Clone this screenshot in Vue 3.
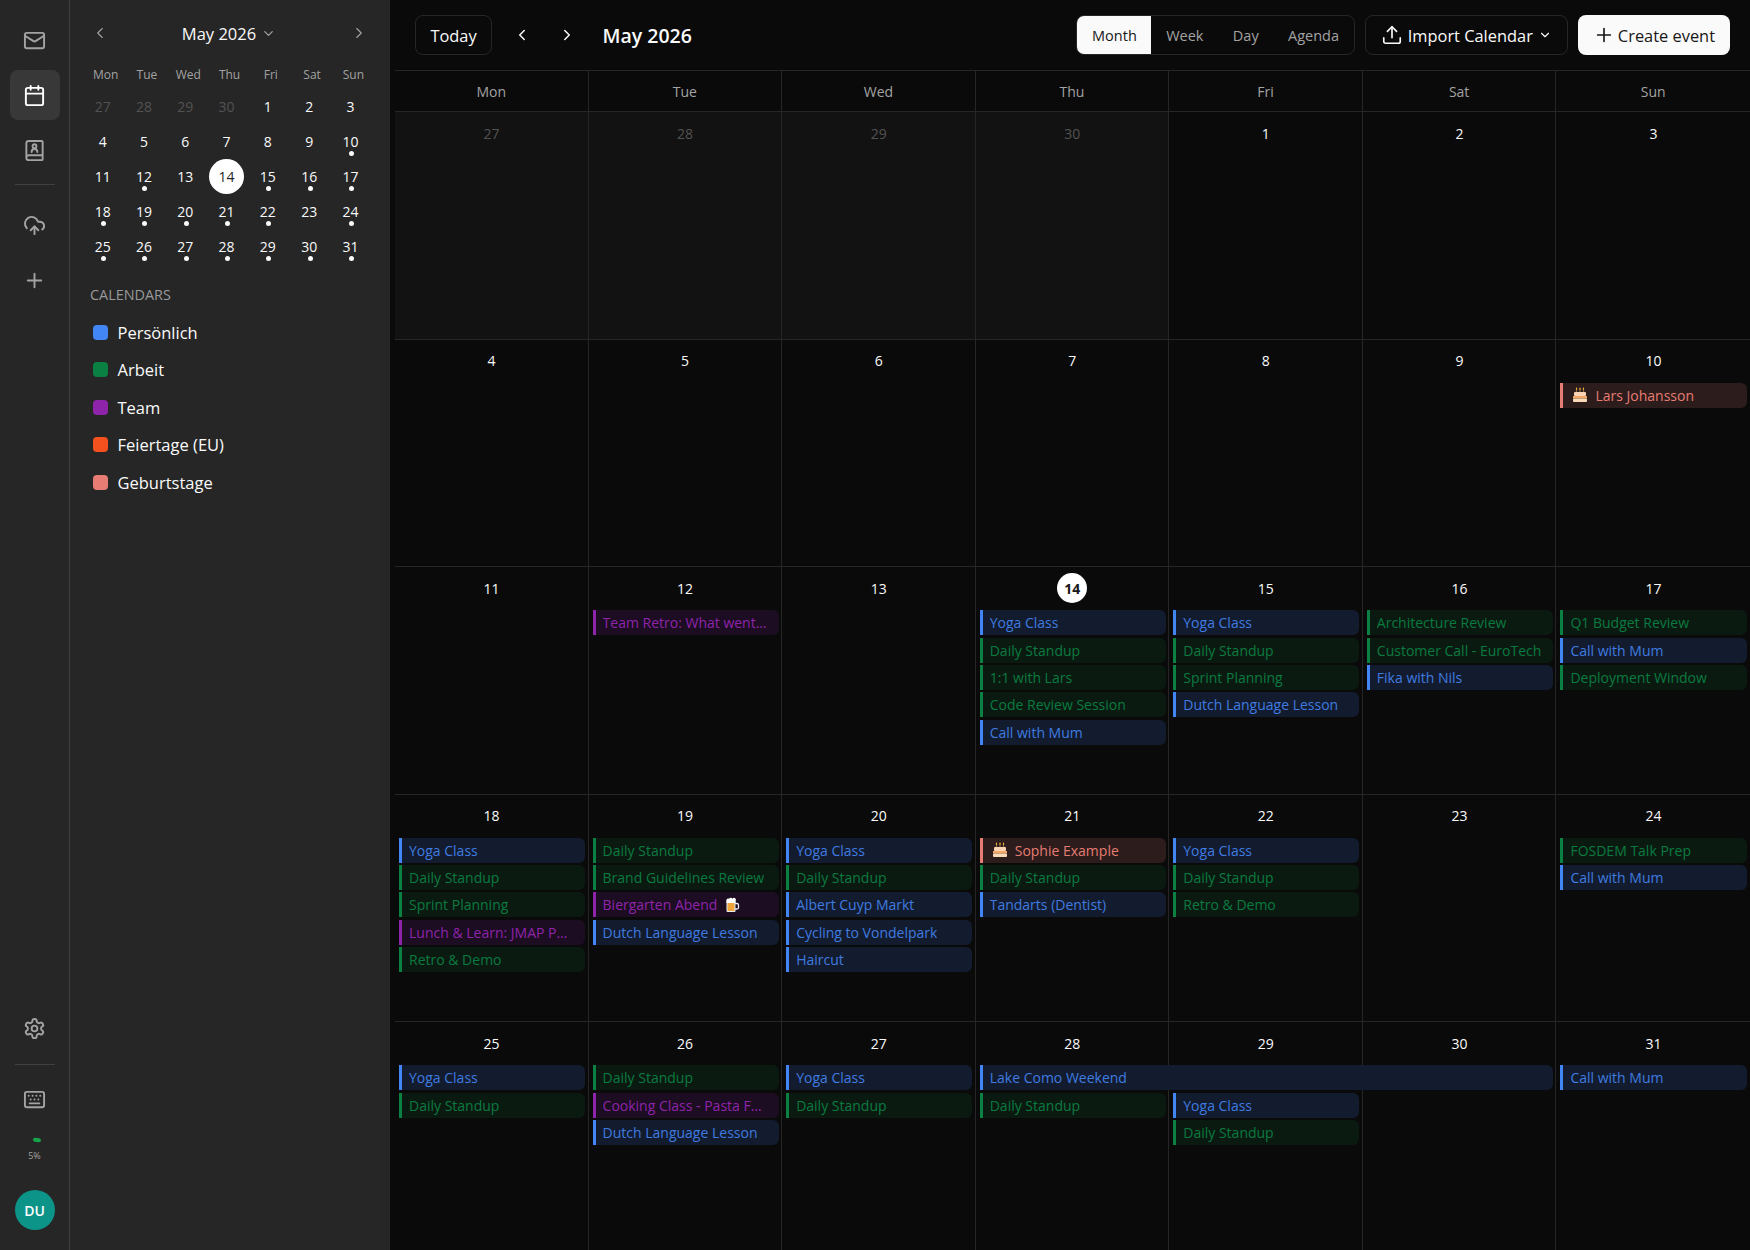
<template>
  <div class="app">
    <!-- Icon rail -->
    <nav class="rail">
      <button class="rail-btn">
        <svg class="ico" viewBox="0 0 24 24"><rect x="2" y="4" width="20" height="16" rx="2" /><path d="m22 7-8.97 5.7a1.94 1.94 0 0 1-2.06 0L2 7" /></svg>
      </button>
      <button class="rail-btn active">
        <svg class="ico" viewBox="0 0 24 24"><path d="M8 2v4M16 2v4" /><rect x="3" y="4" width="18" height="18" rx="2" /><path d="M3 10h18" /></svg>
      </button>
      <button class="rail-btn">
        <svg class="ico" viewBox="0 0 24 24"><path d="M3.500 19.500v-15A2.500 2.500 0 0 1 6 2h13.500a1 1 0 0 1 1 1v18a1 1 0 0 1-1 1H6a2.500 2.500 0 0 1-2.500-2.500zM3.500 19.500A2.500 2.500 0 0 1 6 17h14.500" /><path d="M15 13.500a3 3 0 1 0-6 0" /><circle cx="12" cy="7.500" r="2" /></svg>
      </button>
      <div class="rail-sep first"></div>
      <button class="rail-btn">
        <svg class="ico" viewBox="0 0 24 24"><path d="M12 13v8" /><path d="M4 14.899A7 7 0 1 1 15.71 8h1.79a4.500 4.500 0 0 1 2.500 8.242" /><path d="m8 17 4-4 4 4" /></svg>
      </button>
      <button class="rail-btn">
        <svg class="ico" viewBox="0 0 24 24"><path d="M5 12h14M12 5v14" /></svg>
      </button>

      <div class="rail-spacer"></div>

      <button class="rail-btn">
        <svg class="ico" viewBox="0 0 24 24"><path d="M12.220 2h-.44a2 2 0 0 0-2 2v.18a2 2 0 0 1-1 1.730l-.43.25a2 2 0 0 1-2 0l-.15-.08a2 2 0 0 0-2.730.73l-.22.38a2 2 0 0 0 .73 2.730l.15.1a2 2 0 0 1 1 1.720v.51a2 2 0 0 1-1 1.740l-.15.09a2 2 0 0 0-.73 2.730l.22.38a2 2 0 0 0 2.730.73l.15-.08a2 2 0 0 1 2 0l.43.25a2 2 0 0 1 1 1.730V20a2 2 0 0 0 2 2h.44a2 2 0 0 0 2-2v-.18a2 2 0 0 1 1-1.730l.43-.25a2 2 0 0 1 2 0l.15.08a2 2 0 0 0 2.730-.73l.22-.39a2 2 0 0 0-.73-2.730l-.15-.08a2 2 0 0 1-1-1.740v-.5a2 2 0 0 1 1-1.740l.15-.09a2 2 0 0 0 .73-2.730l-.22-.38a2 2 0 0 0-2.730-.73l-.15.08a2 2 0 0 1-2 0l-.43-.25a2 2 0 0 1-1-1.730V4a2 2 0 0 0-2-2z" /><circle cx="12" cy="12" r="3" /></svg>
      </button>
      <div class="rail-sep"></div>
      <button class="rail-btn short">
        <svg class="ico" viewBox="0 0 24 24"><path d="M10 8h.01M12 12h.01M14 8h.01M16 12h.01M18 8h.01M6 8h.01M7 16h10M8 12h.01" /><rect x="2" y="4" width="20" height="16" rx="2" /></svg>
      </button>
      <div class="gauge">
        <span class="gauge-bar"></span>
        <span class="gauge-label">5%</span>
      </div>
      <div class="avatar">DU</div>
    </nav>

    <!-- Sidebar with mini month and calendar list -->
    <aside class="sidebar">
      <div class="mini-head">
        <svg class="mini-chev" viewBox="0 0 24 24"><path d="m15 18-6-6 6-6" /></svg>
        <div class="mini-title">
          May 2026
          <svg class="mini-caret" viewBox="0 0 24 24"><path d="m6 9 6 6 6-6" /></svg>
        </div>
        <svg class="mini-chev" viewBox="0 0 24 24"><path d="m9 18 6-6-6-6" /></svg>
      </div>
      <div class="mini-weekdays">
        <span v-for="d in weekdays" :key="d">{{ d }}</span>
      </div>
      <div class="mini-grid">
        <div
          v-for="c in miniCells"
          :key="c.key"
          class="mini-day"
          :class="{ muted: c.outside, today: c.today }"
        >
          <span class="mini-num">{{ c.day }}</span>
          <span v-if="c.dot" class="mini-dot"></span>
        </div>
      </div>

      <div class="cal-label">CALENDARS</div>
      <ul class="cal-list">
        <li v-for="c in calendars" :key="c.name" class="cal-item">
          <span class="swatch" :class="c.kind"></span>
          {{ c.name }}
        </li>
      </ul>
    </aside>

    <!-- Main month view -->
    <main class="main">
      <header class="toolbar">
        <button class="today-btn">Today</button>
        <svg class="nav-chev" viewBox="0 0 24 24"><path d="m15 18-6-6 6-6" /></svg>
        <svg class="nav-chev" viewBox="0 0 24 24"><path d="m9 18 6-6-6-6" /></svg>
        <h1 class="title">May 2026</h1>
        <div class="tool-spacer"></div>
        <div class="views">
          <button v-for="v in views" :key="v" class="view" :class="{ on: v === 'Month' }">{{ v }}</button>
        </div>
        <button class="import-btn">
          <svg class="import-ico" viewBox="0 0 24 24"><path d="M12 3v12" /><path d="m17 8-5-5-5 5" /><path d="M21 15v4a2 2 0 0 1-2 2H5a2 2 0 0 1-2-2v-4" /></svg>
          Import Calendar
          <svg class="import-caret" viewBox="0 0 24 24"><path d="m6 9 6 6 6-6" /></svg>
        </button>
        <button class="create-btn">
          <svg class="create-ico" viewBox="0 0 24 24"><path d="M5 12h14M12 5v14" /></svg>
          Create event
        </button>
      </header>

      <div class="head-row">
        <div v-for="d in weekdays" :key="d" class="head-cell">{{ d }}</div>
      </div>

      <div class="month">
        <div v-for="c in cells" :key="c.key" class="cell" :class="{ outside: c.outside }">
          <div class="cell-day">
            <span class="cell-num" :class="{ today: c.today }">{{ c.day }}</span>
          </div>
          <template v-for="(e, i) in c.events" :key="i">
            <div v-if="e.gap" class="ev-gap"></div>
            <div
              v-else
              class="ev"
              :class="e.kind"
              :style="e.span ? { width: `calc(${e.span * 100}% + ${(e.span - 1) * 7.5}px)` } : null"
            >
              <svg v-if="e.cake" class="emoji cake" viewBox="0 0 16 16">
                <path d="M4.500 2v3M8 2v3M11.500 2v3" stroke="#8a6a3a" stroke-width="1.200" />
                <path d="M4.500 1.200v1M8 1.200v1M11.500 1.200v1" stroke="#f6b73c" stroke-width="1.200" />
                <rect x="2" y="5" width="12" height="4" rx="1" fill="#fbd3b4" />
                <rect x="1" y="9" width="14" height="2.500" fill="#f2a765" />
                <rect x="1" y="11.500" width="14" height="3.500" rx="1" fill="#fcdcb8" />
              </svg>
              <span class="ev-text">{{ e.text }}</span>
              <svg v-if="e.beer" class="emoji beer" viewBox="0 0 16 16">
                <path d="M11.500 6.500h1.500a1.500 1.500 0 0 1 1.500 1.500v2.500a1.500 1.500 0 0 1-1.500 1.500h-1.500" fill="none" stroke="#e8eef2" stroke-width="1.300" />
                <rect x="2.500" y="3" width="9" height="12" rx="1" fill="#e8eef2" />
                <rect x="3.500" y="5.500" width="7" height="8.500" fill="#f0a63c" />
                <path d="M2.500 4a1.800 1.800 0 0 1 2.500-2.300 2 2 0 0 1 3.500 0A1.800 1.800 0 0 1 11.500 4v2h-9z" fill="#fff" />
              </svg>
            </div>
          </template>
        </div>
      </div>
    </main>
  </div>
</template>

<script setup>
const weekdays = ['Mon', 'Tue', 'Wed', 'Thu', 'Fri', 'Sat', 'Sun']
const views = ['Month', 'Week', 'Day', 'Agenda']

const calendars = [
  { name: 'Persönlich', kind: 'blue' },
  { name: 'Arbeit', kind: 'green' },
  { name: 'Team', kind: 'purple' },
  { name: 'Feiertage (EU)', kind: 'orange' },
  { name: 'Geburtstage', kind: 'coral' },
]

const yoga = { kind: 'blue', text: 'Yoga Class' }
const standup = { kind: 'green', text: 'Daily Standup' }
const mum = { kind: 'blue', text: 'Call with Mum' }
const dutch = { kind: 'blue', text: 'Dutch Language Lesson' }
const retro = { kind: 'green', text: 'Retro & Demo' }
const sprint = { kind: 'green', text: 'Sprint Planning' }

const eventsByDay = {
  10: [{ kind: 'coral', text: 'Lars Johansson', cake: true }],
  12: [{ kind: 'purple', text: 'Team Retro: What went well?' }],
  14: [yoga, standup, { kind: 'green', text: '1:1 with Lars' }, { kind: 'green', text: 'Code Review Session' }, mum],
  15: [yoga, standup, sprint, dutch],
  16: [{ kind: 'green', text: 'Architecture Review' }, { kind: 'green', text: 'Customer Call - EuroTech' }, { kind: 'blue', text: 'Fika with Nils' }],
  17: [{ kind: 'green', text: 'Q1 Budget Review' }, mum, { kind: 'green', text: 'Deployment Window' }],
  18: [yoga, standup, sprint, { kind: 'purple', text: 'Lunch & Learn: JMAP Push' }, retro],
  19: [standup, { kind: 'green', text: 'Brand Guidelines Review' }, { kind: 'purple', text: 'Biergarten Abend', beer: true }, dutch],
  20: [yoga, standup, { kind: 'blue', text: 'Albert Cuyp Markt' }, { kind: 'blue', text: 'Cycling to Vondelpark' }, { kind: 'blue', text: 'Haircut' }],
  21: [{ kind: 'coral', text: 'Sophie Example', cake: true }, standup, { kind: 'blue', text: 'Tandarts (Dentist)' }],
  22: [yoga, standup, retro],
  24: [{ kind: 'green', text: 'FOSDEM Talk Prep' }, mum],
  25: [yoga, standup],
  26: [standup, { kind: 'purple', text: 'Cooking Class - Pasta Fatta' }, dutch],
  27: [yoga, standup],
  28: [{ kind: 'blue', text: 'Lake Como Weekend', span: 3 }, standup],
  29: [{ gap: true }, yoga, standup],
  30: [{ gap: true }],
  31: [mum],
}

// 27-30 April lead in, then all of May
const days = [
  ...[27, 28, 29, 30].map(day => ({ day, outside: true })),
  ...Array.from({ length: 31 }, (_, i) => ({ day: i + 1, outside: false })),
]

const cells = days.map(d => ({
  ...d,
  key: `${d.outside ? 'a' : 'm'}${d.day}`,
  today: !d.outside && d.day === 14,
  events: d.outside ? [] : eventsByDay[d.day] || [],
}))

const miniCells = cells.map(c => ({
  ...c,
  dot: c.events.length > 0 && !c.today,
}))
</script>

<style>
html, body { margin: 0; background: #0a0a0a; }
</style>

<style scoped>
.app {
  display: flex;
  height: 100vh;
  overflow: hidden;
  background: #0a0a0a;
  color: #fafafa;
  font-family: "Open Sans", "Noto Sans", sans-serif;
}
button { font-family: inherit; cursor: pointer; }
svg { fill: none; stroke-linecap: round; stroke-linejoin: round; }

/* Rail */
.rail {
  width: 69px;
  flex-shrink: 0;
  background: #262626;
  border-right: 1px solid #404040;
  display: flex;
  flex-direction: column;
  align-items: center;
  padding: 15px 0 20px;
  box-sizing: content-box;
  height: calc(100% - 35px);
}
.rail-btn {
  width: 50px;
  height: 50px;
  margin-bottom: 5px;
  flex-shrink: 0;
  display: flex;
  align-items: center;
  justify-content: center;
  background: none;
  border: 0;
  border-radius: 8px;
  color: #a3a3a3;
}
.rail-btn.active { background: #383838; color: #fff; }
.rail-btn.short { margin-bottom: 0; }
.ico { width: 23px; height: 23px; stroke: currentColor; stroke-width: 2; }
.rail-sep { width: 40px; height: 1px; background: #404040; margin: 5px 0 10px; flex-shrink: 0; }
.rail-sep.first { margin: 4px 0 15px; }
.rail-spacer { flex: 1; }
.gauge { display: flex; flex-direction: column; align-items: center; margin-top: 13.500px; }
.gauge-bar {
  width: 8px;
  height: 4px;
  margin-left: 5px;
  border-radius: 2px;
  background: #16a34a;
  transform: rotate(6deg);
}
.gauge-label { font-size: 9px; line-height: 12px; color: #a3a3a3; margin-top: 8px; }
.avatar {
  width: 40px;
  height: 40px;
  margin-top: 28px;
  border-radius: 50%;
  background: #0d9488;
  color: #fff;
  font-size: 14px;
  font-weight: 600;
  display: flex;
  align-items: center;
  justify-content: center;
  flex-shrink: 0;
}

/* Sidebar */
.sidebar {
  width: 320px;
  flex-shrink: 0;
  background: #262626;
  box-sizing: border-box;
  padding: 18px 0 0 20px;
}
.mini-head {
  display: flex;
  align-items: center;
  justify-content: space-between;
  width: 278px;
  height: 30px;
  color: #a3a3a3;
}
.mini-chev { width: 18px; height: 18px; stroke: currentColor; stroke-width: 1.500; margin-left: 1px; }
.mini-title { display: flex; align-items: center; gap: 5px; font-size: 16.500px; color: #fafafa; }
.mini-caret { width: 15px; height: 15px; stroke: #a3a3a3; stroke-width: 2; }
.mini-weekdays {
  display: grid;
  grid-template-columns: repeat(7, 41.300px);
  margin: 14px 0 0 -6px;
  padding-left: 1px;
  height: 24px;
  align-items: center;
  font-size: 12px;
  color: #a3a3a3;
  text-align: center;
}
.mini-grid {
  display: grid;
  grid-template-columns: repeat(7, 41.300px);
  grid-auto-rows: 35px;
  margin: 3px 0 0 -8px;
}
.mini-day {
  position: relative;
  display: flex;
  align-items: center;
  justify-content: center;
  font-size: 14px;
  color: #fafafa;
}
.mini-day.muted { color: #525252; }
.mini-day.today .mini-num {
  width: 35px;
  height: 35px;
  border-radius: 50%;
  background: #fff;
  color: #262626;
  display: flex;
  align-items: center;
  justify-content: center;
}
.mini-dot {
  position: absolute;
  left: 50%;
  bottom: 3px;
  width: 5px;
  height: 5px;
  margin-left: -1.500px;
  border-radius: 50%;
  background: #fafafa;
}
.cal-label { margin-top: 21px; font-size: 14.400px; color: #9a9a9a; line-height: 20px; }
.cal-list { list-style: none; margin: 8.500px 0 0; padding: 0 0 0 3px; }
.cal-item {
  display: flex;
  align-items: center;
  gap: 9.500px;
  height: 37.500px;
  font-size: 16.500px;
  color: #fafafa;
}
.swatch { width: 15px; height: 15px; border-radius: 4px; }
.swatch.blue { background: #4285f4; }
.swatch.green { background: #0b8043; }
.swatch.purple { background: #8e24aa; }
.swatch.orange { background: #f4511e; }
.swatch.coral { background: #e67c73; }

/* Main */
.main {
  flex: 1;
  min-width: 0;
  display: flex;
  flex-direction: column;
  padding-left: 5px;
}
.toolbar {
  height: 71px;
  flex-shrink: 0;
  box-sizing: border-box;
  display: flex;
  align-items: center;
  padding: 0 20px;
  border-bottom: 1px solid #262626;
}
.today-btn {
  width: 77px;
  height: 40px;
  margin-right: 21px;
  background: none;
  border: 1px solid #262626;
  border-radius: 8px;
  color: #fafafa;
  font-size: 16.400px;
}
.nav-chev { width: 18px; height: 18px; stroke: #fafafa; stroke-width: 2; margin-right: 27px; }
.title { margin: 0 0 0 -0.500px; font-size: 19.500px; font-weight: 600; }
.tool-spacer { flex: 1; }
.views {
  display: flex;
  height: 40px;
  box-sizing: border-box;
  border: 1px solid #262626;
  border-radius: 8px;
  overflow: hidden;
  margin-right: 10px;
}
.view {
  padding: 0 14.700px;
  background: none;
  border: 0;
  color: #a3a3a3;
  font-size: 14.500px;
}
.view.on { background: #fafafa; color: #171717; }
.import-btn {
  display: flex;
  align-items: center;
  height: 40px;
  padding: 0 15px;
  margin-right: 10px;
  background: none;
  border: 1px solid #262626;
  border-radius: 8px;
  color: #fafafa;
  font-size: 16.400px;
}
.import-ico { width: 22px; height: 22px; stroke: currentColor; stroke-width: 1.800; margin-right: 5px; }
.import-caret { width: 14px; height: 14px; stroke: currentColor; stroke-width: 2; margin-left: 5px; }
.create-btn {
  display: flex;
  align-items: center;
  height: 40px;
  padding: 0 15px;
  background: #fafafa;
  border: 0;
  border-radius: 8px;
  color: #171717;
  font-size: 16.400px;
}
.create-ico { width: 22px; height: 22px; stroke: currentColor; stroke-width: 1.800; margin-right: 3px; }

.head-row {
  display: grid;
  grid-template-columns: repeat(7, 1fr);
  height: 41px;
  flex-shrink: 0;
  box-sizing: border-box;
  border-bottom: 1px solid #262626;
}
.head-cell {
  display: flex;
  align-items: center;
  justify-content: center;
  font-size: 14px;
  color: #a3a3a3;
  border-right: 1px solid #262626;
}
.head-cell:last-child { border-right: 0; }

.month {
  flex: 1;
  min-height: 0;
  display: grid;
  grid-template-columns: repeat(7, minmax(0, 1fr));
  grid-template-rows: repeat(5, minmax(0, 1fr));
}
.cell {
  box-sizing: border-box;
  padding: 0 2.500px 0 4px;
  border-right: 1px solid #262626;
  border-bottom: 1px solid #262626;
  min-width: 0;
}
.cell:nth-child(7n) { border-right: 0; }
.cell:nth-last-child(-n + 7) { border-bottom: 0; }
.cell.outside { background: #121212; }
.cell-day {
  height: 42px;
  margin: 0 0 1px -1px;
  display: flex;
  align-items: center;
  justify-content: center;
  font-size: 14px;
  color: #fafafa;
}
.outside .cell-day { color: #525252; }
.cell-num.today {
  width: 30px;
  height: 30px;
  border-radius: 50%;
  background: #fff;
  color: #171717;
  font-weight: 700;
  display: flex;
  align-items: center;
  justify-content: center;
}
.ev, .ev-gap { height: 25px; margin-bottom: 2.330px; }
.ev {
  position: relative;
  display: flex;
  align-items: center;
  box-sizing: border-box;
  padding: 0 10px 0 7px;
  border-left: 3px solid;
  border-radius: 0 6px 6px 0;
  font-size: 14px;
  min-width: 0;
}
.ev-text { overflow: hidden; white-space: nowrap; text-overflow: ellipsis; }
.ev.blue { color: #3f7be0; background: #131c2e; border-color: #4285f4; }
.ev.green { color: #0b7a40; background: #0a1a11; border-color: #0b8043; }
.ev.purple { color: #8e24aa; background: #1d0d23; border-color: #8e24aa; }
.ev.coral { color: #e67c73; background: #2c1c1b; border-color: #e67c73; }
.emoji { width: 16px; height: 16px; flex-shrink: 0; }
.emoji.cake { margin: 0 7px 0 2px; }
.emoji.beer { margin-left: 7px; }
</style>
